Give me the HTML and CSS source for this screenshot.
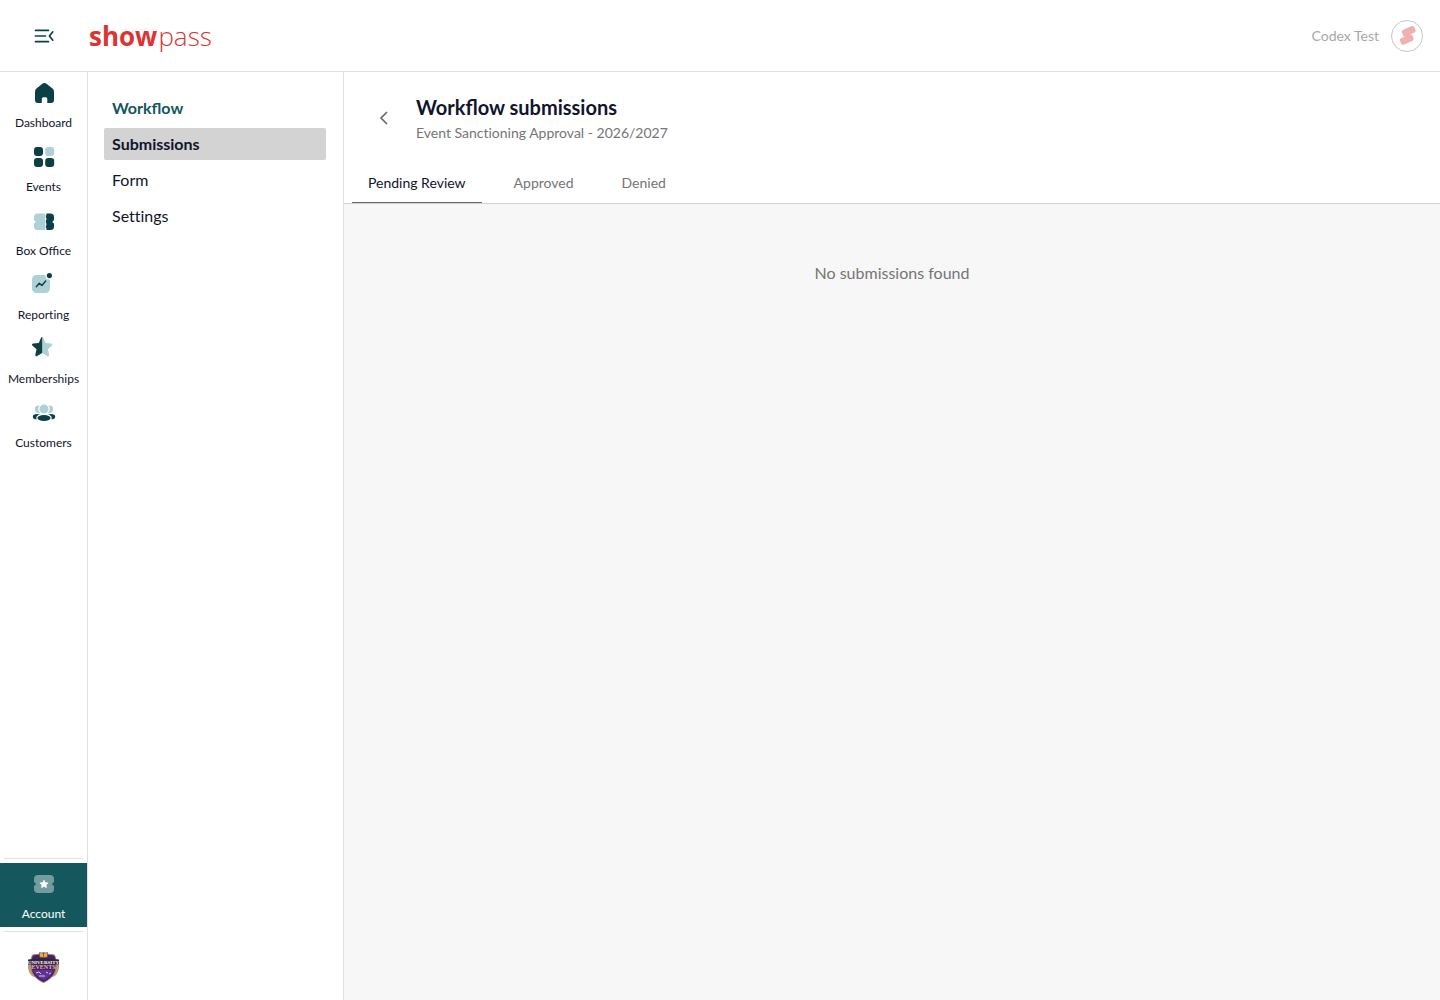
FILE: index.html
```html
<!DOCTYPE html>
<html lang="en">
	<head>
		<meta charset="utf-8" />
		<title>Workflow submissions</title>
		<link rel="stylesheet" href="styles.css">
	</head>
	<body>
		<header class="topbar">
			<button class="menu-btn" type="button" aria-label="Collapse menu">
				<svg width="20" height="16" viewBox="0 0 20 16" fill="none" stroke="#0d4045" stroke-width="1.7" stroke-linecap="round" stroke-linejoin="round">
					<path d="M1.500 2.300h13M1.500 8h10M1.500 13.700h13M18.800 3.800L15.400 8l3.400 4.200"/>
				</svg>
			</button>
			<a class="logo" href="#"><b>show</b><span>pass</span></a>
			<div class="user">
				<span>Codex Test</span>
				<button class="avatar" type="button" aria-label="User menu">
					<svg width="30" height="30" viewBox="0 0 30 30" fill="#efb0b0">
						<rect x="10" y="6.800" width="13.500" height="7" rx="2.500" transform="rotate(-24 16.700 10.300)"/>
						<rect x="8" y="15" width="13.500" height="7" rx="2.500" transform="rotate(-24 14.700 18.500)"/>
						<path d="M11 12l9.500 2.500v2l-9.500-2z"/>
					</svg>
				</button>
			</div>
		</header>
		<div class="layout">
			<nav class="sidebar">
				<ul>
					<li>
						<a class="side-item" href="#">
							<svg class="icon" viewBox="0 0 25 24">
								<path class="dark" d="M11.300 2.700a3.400 3.400 0 0 1 4.200 0l6 4.900A4 4 0 0 1 23 10.700V19a3 3 0 0 1-3 3h-3.700v-4.300a1.500 1.500 0 0 0-1.500-1.500h-2.500a1.500 1.500 0 0 0-1.500 1.500V22H7a3 3 0 0 1-3-3v-8.300a4 4 0 0 1 1.500-3.100z"/>
							</svg>
							<span>Dashboard</span>
						</a>
					</li>
					<li>
						<a class="side-item" href="#">
							<svg class="icon" viewBox="0 0 25 24">
								<rect class="dark" x="3" y="2" width="9" height="9" rx="3"/>
								<rect class="light" x="14.200" y="2" width="9" height="9" rx="3"/>
								<rect class="dark" x="3" y="13" width="9" height="9" rx="3"/>
								<rect class="dark" x="14.200" y="13" width="9" height="9" rx="3"/>
							</svg>
							<span>Events</span>
						</a>
					</li>
					<li>
						<a class="side-item" href="#">
							<svg class="icon" viewBox="0 0 25 24">
								<path class="light" d="M6.500 4.500h8v16.500h-8A3.500 3.500 0 0 1 3 17.500v-3.300a1.500 1.500 0 0 0 0-3V8a3.500 3.500 0 0 1 3.500-3.500z"/>
								<path class="dark" d="M15 4.500h4.500A3.500 3.500 0 0 1 23 8v3.200a1.500 1.500 0 0 0 0 3v3.300a3.500 3.500 0 0 1-3.500 3.500H15z"/>
								<path d="M14.800 4v2.200M14.800 8.700v2.200M14.800 14.300v2.200M14.800 19v2.500" stroke="#fff" stroke-width="1.200"/>
							</svg>
							<span class="liga">Box Office</span>
						</a>
					</li>
					<li>
						<a class="side-item" href="#">
							<svg class="icon" viewBox="0 0 25 24">
								<rect class="light" x="1" y="2" width="18" height="18" rx="4.500"/>
								<circle cx="18.400" cy="2.600" r="4" fill="#fff"/>
								<circle class="dark" cx="18.400" cy="2.600" r="2.600"/>
								<path d="M5.300 13.700l3-3.500 2.600 2.300 3.800-4.500" fill="none" stroke="#0d4045" stroke-width="1.400" stroke-linecap="round" stroke-linejoin="round"/>
							</svg>
							<span>Reporting</span>
						</a>
					</li>
					<li>
						<a class="side-item" href="#">
							<svg class="icon" viewBox="0 0 25 24">
								<path class="light" d="M11.200 0c.6 0 1 .3 1.300.9l2.100 5 5.600.6c1.200.1 1.600 1.300.8 2.100l-4.100 3.700 1.200 5.400c.2 1.200-.8 1.900-1.800 1.300l-5.100-2.900z"/>
								<path class="dark" d="M11.200 0c-.6 0-1 .3-1.300.9l-2.100 5-5.600.6C1 6.600.6 7.800 1.400 8.600l4.100 3.700-1.200 5.400c-.2 1.200.8 1.900 1.800 1.300l5.100-2.900z"/>
							</svg>
							<span>Memberships</span>
						</a>
					</li>
					<li>
						<a class="side-item" href="#">
							<svg class="icon" viewBox="0 0 25 24">
								<circle class="light" cx="7.500" cy="8.200" r="3.700"/>
								<circle class="light" cx="18.500" cy="8.200" r="3.700"/>
								<ellipse class="dark" cx="6" cy="15.700" rx="4.200" ry="2.600"/>
								<ellipse class="dark" cx="20" cy="15.700" rx="4.200" ry="2.600"/>
								<circle class="light" cx="13" cy="8" r="5.100" stroke="#fff" stroke-width="1.200"/>
								<ellipse class="dark" cx="13" cy="17" rx="7.200" ry="3.700" stroke="#fff" stroke-width="1.200"/>
							</svg>
							<span>Customers</span>
						</a>
					</li>
				</ul>
				<div class="side-bottom">
					<a class="side-item active" href="#">
						<svg class="icon" viewBox="0 0 25 24">
							<path d="M7 3h12a4 4 0 0 1 4 4v3.200a1.800 1.800 0 0 0 0 3.600V17a4 4 0 0 1-4 4H7a4 4 0 0 1-4-4v-3.200a1.800 1.800 0 0 0 0-3.600V7a4 4 0 0 1 4-4z" fill="#739c9f"/>
							<path d="M13 8l1.300 2.500 2.900.4-2.100 2 .5 2.900-2.600-1.400-2.600 1.400.5-2.900-2.100-2 2.900-.4z" fill="#fff" stroke="#fff" stroke-width=".5" stroke-linejoin="round"/>
						</svg>
						<span>Account</span>
					</a>
					<a class="org" href="#" aria-label="Organization">
						<svg width="33" height="32" viewBox="0 0 33 32">
							<path d="M3 9C0 13 0 20 5 25l8 3-7-9zM30 9c3 4 3 11-2 16l-8 3 7-9z" fill="#b89a7c"/>
							<path d="M16.500 1.500l3 1.500 8 1 2 6-1 9c-1 5-6 10-12 12.500C10.500 29 5.500 24 4.500 19l-1-9 2-6 8-1z" fill="#432168" stroke="#a58362"/>
							<path d="M6 19h21c-2 5-6 8-10.500 10.300C12 27 8 24 6 19z" fill="#613196"/>
							<path d="M12.500 1.500l4 .8 4-.8V6l-4 .8-4-.8z" fill="#e3ad5b" stroke="#6d3f27" stroke-width=".6"/>
							<path d="M16.500 2.300v4.500" stroke="#6d3f27" stroke-width=".7"/>
							<path d="M1 8.500q15.500-2 31 0v5q-15.500-1.500-31 0z" fill="#34243f"/>
							<text class="crest-name" x="16.500" y="12.500" text-anchor="middle">UNIVERSITY</text>
							<text class="crest-type" x="16.500" y="18" text-anchor="middle">EVENTS</text>
							<path d="M9 22l3-1 2 2M19 21l2 1M22 23l2-1M12 25h6" stroke="#d8c8e6" fill="none"/>
						</svg>
					</a>
				</div>
			</nav>
			<nav class="subnav">
				<h2 class="liga">Workflow</h2>
				<ul>
					<li><a class="current" href="#">Submissions</a></li>
					<li><a href="#">Form</a></li>
					<li><a href="#">Settings</a></li>
				</ul>
			</nav>
			<main class="main">
				<div class="page-head">
					<div class="page-title">
						<button class="back-btn" type="button" aria-label="Back">
							<svg width="16" height="16" viewBox="0 0 16 16" fill="none" stroke="#6b6b6b" stroke-width="1.700">
								<path d="M11 2L5 8l6 6"/>
							</svg>
						</button>
						<div>
							<h1 class="liga">Workflow submissions</h1>
							<p>Event Sanctioning Approval - 2026/2027</p>
						</div>
					</div>
					<div class="tabs" role="tablist">
						<button class="selected" type="button" role="tab" aria-selected="true">Pending Review</button>
						<button type="button" role="tab" aria-selected="false">Approved</button>
						<button type="button" role="tab" aria-selected="false">Denied</button>
					</div>
				</div>
				<p class="empty">No submissions found</p>
			</main>
		</div>
	</body>
</html>
```

FILE: styles.css
```css
* {
	box-sizing: border-box;
	margin: 0;
	padding: 0;
}
body {
	display: flex;
	flex-direction: column;
	min-height: 100vh;
	font-family: Lato, "Liberation Sans", sans-serif;
	font-size: 16px;
	font-variant-ligatures: none;
	line-height: 24px;
	color: #11142d;
	background-color: #fff;
}
ul {
	list-style: none;
}
a {
	color: inherit;
	text-decoration: none;
}
button {
	font: inherit;
	color: inherit;
	background: none;
	border: none;
	cursor: pointer;
}
svg {
	display: block;
}
/* keeps fl and ffi joined */
.liga {
	font-variant-ligatures: normal;
}

/* top bar */
.topbar {
	display: flex;
	align-items: center;
	height: 72px;
	padding-right: 17px;
	border-bottom: 1px solid #e0e0e0;
}
.menu-btn {
	display: flex;
	justify-content: center;
	width: 88px;
	padding: 8px 0;
}
.logo {
	display: flex;
	gap: 1px;
	padding-left: 1px;
	font-family: "Open Sans", sans-serif;
	font-size: 26px;
	font-weight: 350;
	line-height: 32px;
	color: #dd3333;
}
.logo b {
	font-weight: 700;
}
.user {
	display: flex;
	align-items: center;
	gap: 12px;
	margin-left: auto;
	font-size: 14px;
	color: #a6a7b2;
}
.avatar {
	width: 32px;
	height: 32px;
	border: 1px solid #c8c8c8;
	border-radius: 50%;
}

.layout {
	display: flex;
	flex: 1;
}

/* main navigation */
.sidebar {
	display: flex;
	flex-direction: column;
	justify-content: space-between;
	width: 88px;
	border-right: 1px solid #e0e0e0;
}
.side-item {
	display: flex;
	flex-direction: column;
	align-items: center;
	gap: 10px;
	height: 64px;
	padding-top: 9px;
	font-size: 12px;
	line-height: 16px;
}
.side-item.active {
	color: #fff;
	background-color: #14575d;
}
.icon {
	width: 25px;
	height: 24px;
}
.dark {
	fill: #0d4045;
}
.light {
	fill: #add1d5;
}
.side-bottom::before,
.org::before {
	content: "";
	display: block;
	height: 1px;
	margin: 0 4px 4px;
	background-color: #e0e0e0;
}
.org {
	display: flex;
	flex-direction: column;
	align-items: center;
	padding-bottom: 17px;
}
.org::before {
	align-self: stretch;
	margin: 4px 4px 19px;
}
.crest-name,
.crest-type {
	font-family: "Liberation Serif", serif;
	font-size: 5px;
	font-weight: 700;
	fill: #fff;
}
.crest-type {
	font-size: 6px;
	fill: #e7bd91;
}

/* workflow navigation */
.subnav {
	width: 256px;
	padding: 20px 17px 20px 16px;
	border-right: 1px solid #e0e0e0;
}
.subnav h2 {
	padding: 4px 8px;
	font-size: 16px;
	color: #14575d;
}
.subnav ul {
	display: flex;
	flex-direction: column;
	gap: 4px;
	margin-top: 4px;
}
.subnav a {
	display: block;
	padding: 4px 8px;
	border-radius: 2px;
}
.subnav .current {
	font-weight: 700;
	background-color: #d3d3d3;
}

/* page */
.main {
	flex: 1;
	background-color: #f7f7f7;
}
.page-head {
	background-color: #fff;
	border-bottom: 1px solid #d0d0d0;
}
.page-title {
	display: flex;
	align-items: flex-start;
	gap: 16px;
	padding: 21px 24px 0;
}
.back-btn {
	display: flex;
	align-items: center;
	justify-content: center;
	width: 32px;
	height: 50px;
}
.page-title h1 {
	font-size: 20px;
	line-height: 28px;
}
.page-title p {
	font-size: 14px;
	line-height: 24px;
	color: #757575;
}
.tabs {
	display: flex;
	gap: 16px;
	margin-top: 18px;
	padding: 0 8px;
	font-size: 14px;
	color: #757575;
}
.tabs button {
	height: 40px;
	padding: 0 16px;
	border-bottom: 1px solid transparent;
}
.tabs .selected {
	color: #11142d;
	border-bottom-color: #6b6b6b;
}
.empty {
	padding: 57px 24px;
	text-align: center;
	color: #757575;
}
```
